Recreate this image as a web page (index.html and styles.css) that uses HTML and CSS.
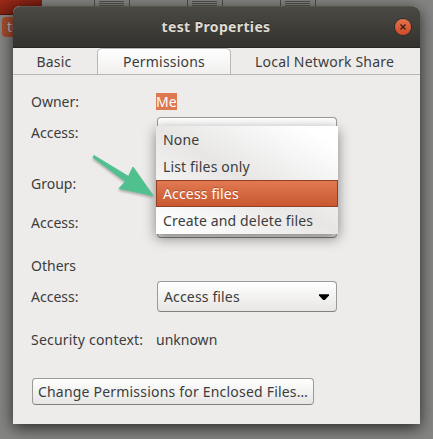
FILE: index.html
```html
<!DOCTYPE html>
<html lang="en">
<head>
  <meta charset="UTF-8" />
  <meta name="viewport" content="width=device-width, initial-scale=1.0">
  <title>test Properties</title>
  <link rel="stylesheet" href="styles.css">
</head>
<body>
  <!-- Desktop files behind the window -->
  <div class="desktop">
    <div class="folder"></div>
    <div class="folder-name">te</div>
    <div class="doc doc-1"></div>
    <div class="doc doc-2"></div>
    <div class="doc doc-3"></div>
  </div>

  <div class="window">
    <header class="titlebar">
      <h1>test Properties</h1>
      <button class="close" aria-label="Close">
        <svg width="6" height="6" viewBox="0 0 6 6"><path d="M0.5 0.5L5.5 5.5M5.5 0.5L0.5 5.5" stroke="#3a2018" stroke-width="1.3" fill="none"/></svg>
      </button>
    </header>

    <nav class="tabs">
      <button class="tab tab-basic"><span>Basic</span></button>
      <button class="tab tab-permissions active"><span>Permissions</span></button>
      <button class="tab tab-share"><span>Local Network Share</span></button>
    </nav>

    <main class="panel">
      <div class="row owner">
        <span class="label">Owner:</span>
        <span class="selected-text">Me</span>
      </div>
      <div class="row">
        <span class="label">Access:</span>
        <div class="combo"></div>
      </div>
      <div class="row group">
        <span class="label">Group:</span>
      </div>
      <div class="row group-access">
        <span class="label">Access:</span>
        <div class="combo-wrap">
          <div class="combo"></div>
          <ul class="menu">
            <li>None</li>
            <li>List files only</li>
            <li class="current">Access files</li>
            <li class="create">Create and delete files</li>
          </ul>
          <svg class="arrow" width="66" height="48" viewBox="0 0 66 48"><path d="M3 2.5L37.5 23.5L42 14L62 42.5L28 35.5L34.5 28.5L2 4.5Z" fill="#50c08f" stroke="#50c08f" stroke-width="1" stroke-linejoin="round"/></svg>
        </div>
      </div>
      <div class="row others">
        <span class="label">Others</span>
      </div>
      <div class="row">
        <span class="label">Access:</span>
        <div class="combo">
          <span>Access files</span>
          <svg width="10" height="6" viewBox="0 0 10 6"><path d="M0 0.3H10V1.5L5.8 6H4.2L0 1.5Z" fill="#000"/></svg>
        </div>
      </div>
      <div class="row security">
        <span class="label context">Security context:</span>
        <span>unknown</span>
      </div>
      <button class="change-btn">Change Permissions for Enclosed Files…</button>
    </main>
  </div>
</body>
</html>
```
FILE: styles.css
```css
:root {
  --panel: #edeceb;
  --text: #3c3c3c;
  --accent: #dd7850;
}
* { box-sizing: border-box; }
body {
  margin: 0;
  height: 439px;
  overflow: hidden;
  position: relative;
  padding: 6px 13px 15px;
  background: #858583;
  color: var(--text);
  font-family: 'Noto Sans', 'Open Sans', sans-serif;
  font-size: 14px;
}
button {
  font: inherit;
  color: inherit;
  padding: 0;
  border: none;
}

/* Desktop */
.folder {
  position: absolute;
  left: 0;
  top: 0;
  width: 42px;
  height: 15px;
  background: linear-gradient(160deg, #9b2b1a, #65150b);
  border-bottom: 1px solid #501209;
}
.folder-name {
  position: absolute;
  left: 2px;
  top: 17px;
  width: 30px;
  height: 20px;
  padding-left: 5px;
  line-height: 19px;
  border-radius: 4px;
  background: #a34c2c;
  color: #bbb;
}
.doc {
  position: absolute;
  top: -10px;
  width: 36px;
  height: 30px;
  border: 1px solid #4c4c4a;
  background: #858583;
}
.doc::after {
  content: "";
  position: absolute;
  left: 4px;
  top: 10px;
  width: 25px;
  height: 7px;
  background: repeating-linear-gradient(#50504e 0 1px, transparent 1px 2px);
}
.doc-1 { left: 94px; }
.doc-2 { left: 187px; }
.doc-3 { left: 280px; }

/* Window */
.window {
  position: relative;
  width: 407px;
  height: 418px;
  border-radius: 7px 7px 0 0;
  background: var(--panel);
  box-shadow: 0 4px 16px rgba(0,0,0,0.7);
}
.titlebar {
  display: flex;
  align-items: center;
  justify-content: center;
  height: 42px;
  padding-left: 24px;
  padding-right: 9px;
  border-radius: 7px 7px 0 0;
  border-top: 1px solid #57564f;
  border-bottom: 1px solid #282723;
  background: linear-gradient(#4a4942, #33322e);
}
.titlebar h1 {
  flex: 1;
  margin: 0;
  text-align: center;
  font-size: 14px;
  line-height: 20px;
  font-weight: bold;
  letter-spacing: 0.35px;
  color: #dfdbd2;
  text-shadow: 0 -1px #22211e;
}
.close {
  display: flex;
  align-items: center;
  justify-content: center;
  width: 16px;
  height: 16px;
  border-radius: 50%;
  background: linear-gradient(#e5714b, #d14b27);
  box-shadow: 0 0 0 1px #302f2b;
}
.tabs {
  display: flex;
  height: 27px;
  border-bottom: 1px solid #b9b7b5;
}
.tab {
  height: 26px;
  line-height: 27px;
  letter-spacing: 0.2px;
  background: none;
  white-space: nowrap;
}
.tab-basic { width: 84px; }
.tab-permissions { width: 134px; }
.tab-share { width: 189px; }
.tab-basic span, .tab-share span { margin-right: 2px; }
.tab.active {
  line-height: 25px;
  border: 1px solid #b9b7b5;
  border-bottom: none;
  border-radius: 5px 5px 0 0;
  background: linear-gradient(#fff, #f0efee);
}

/* Form */
.panel {
  padding: 12px 18px 0;
}
.row {
  display: grid;
  grid-template-columns: 125px 182px;
  align-items: center;
  height: 31px;
}
.owner { height: 29px; margin-bottom: 1px; }
.group { margin-top: 20px; }
.group-access { margin-top: 8px; }
.others { margin-top: 12px; }
.security { margin-top: 12px; }
.context { letter-spacing: 0.2px; }
.selected-text {
  justify-self: start;
  height: 17px;
  line-height: 17px;
  background: var(--accent);
  color: #fff;
}
.combo-wrap { position: relative; }
.combo {
  display: flex;
  align-items: center;
  justify-content: space-between;
  width: 180px;
  height: 31px;
  margin-left: 1px;
  padding: 0 7px 0 6px;
  letter-spacing: 0.15px;
  border: 1px solid #9b9a98;
  border-bottom-color: #81807e;
  border-radius: 4px;
  background: linear-gradient(#fff, #e7e6e4);
}
.menu {
  position: absolute;
  left: 0;
  bottom: 4px;
  width: 182px;
  margin: 0;
  padding: 0;
  list-style: none;
  letter-spacing: 0.15px;
  background: linear-gradient(30deg, #fff 5%, #e7e6e5 50%, #fff 90%);
  box-shadow: 0 4px 12px rgba(0,0,0,0.45);
}
.menu li {
  height: 27px;
  padding-left: 7px;
  line-height: 27px;
  white-space: nowrap;
}
.menu .current {
  padding-left: 6px;
  line-height: 25px;
  border: 1px solid #923f24;
  background: linear-gradient(#e17951, #c95830);
  color: #fff;
  text-shadow: 0 -1px #b14c29;
}
.arrow {
  position: absolute;
  left: -65px;
  top: -54px;
  filter: drop-shadow(0 2px 1px rgba(0,0,0,0.25));
}
.change-btn {
  display: block;
  width: 282px;
  height: 27px;
  margin: 23px 0 0 1px;
  white-space: nowrap;
  line-height: 25px;
  letter-spacing: 0.2px;
  border: 1px solid #9b9a98;
  border-bottom-color: #81807e;
  border-radius: 4px;
  background: linear-gradient(#fff, #e7e6e4);
}
```
